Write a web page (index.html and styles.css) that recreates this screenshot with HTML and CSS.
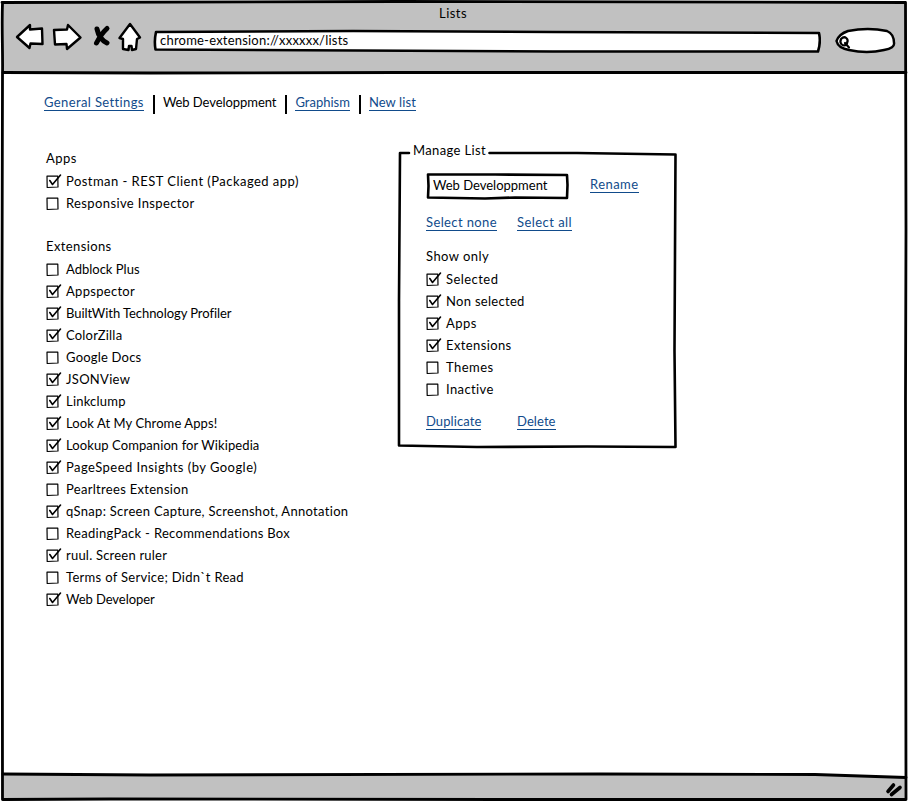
FILE: index.html
```html
<!DOCTYPE html>
<html lang="en">
<head>
<meta charset="utf-8">
<title>Lists</title>
<link rel="stylesheet" href="styles.css">
</head>
<body>
<div class="window">
  <svg class="outline" viewBox="0 0 908 802" aria-hidden="true">
    <path class="bar" d="M2 2H906V72H2ZM2 774L780 774Q850 775 906 777V799H2Z"/>
    <path class="line" d="M2.500 3C1.500 30 3 50 2.500 75L2 300C3 400 1 550 2.500 799.500L110 799L500 799.500L906 799.500L905.500 400L906 230L905.500 2.500L400 1.500L2 2.500"/>
    <path class="line" d="M3 72.500L150 73L400 72.500L906 72.500M3 774L150 775L600 774L815 774.500L906 777.500"/>
    <path class="grip" d="M888 791.500L893.500 785M891.500 794.500L900 787.500"/>
  </svg>
  <header class="toolbar">
    <div class="title">Lists</div>
    <div class="controls">
      <svg class="buttons" viewBox="0 0 128 32" aria-hidden="true">
        <path class="icon" d="M2 16L15 4V8.500L27 7.500L27.500 23L15.500 22.500L14.500 27ZM39 9L52 8.500L53 4L65.500 16.500L52 28L51.500 23L40 23.500ZM115 3L125 16.500L122 18L121 28L117 29L116.500 25H114L113.500 29L108 28V18L104.500 17Z"/>
        <path class="cross" d="M82 8Q84 18 92 22M92 7.500Q86 13 81.500 22"/>
      </svg>
      <div class="address">
        <svg class="shape" viewBox="0 0 668 24" aria-hidden="true"><path d="M3 3L200 2L400 3L666 4Q668 13 665 22.500L400 22.500L2.500 20.500Q1 12 3 3Z"/></svg>
        <span class="url ls-20">chrome-extension://xxxxxx/lists</span>
      </div>
      <svg class="search" viewBox="0 0 62 28" aria-hidden="true">
        <path class="icon" d="M13 4Q33 0 52 4Q59 7 59 16Q60 21 49 23Q32 27 14 23Q3 21 1.500 14Q4 7 13 4Z"/>
        <path class="lens" d="M12 17C8 20 4 17 6 12C10 8 14 12 12 16ZM10 16L14 20.500"/>
      </svg>
    </div>
  </header>
  <nav class="tabs">
    <a class="link ls-40">General Settings</a><span class="ls-n5">Web Developpment</span><a class="link ls-0">Graphism</a><a class="link ls-10">New list</a>
  </nav>
  <svg class="symbols" aria-hidden="true">
    <symbol id="off" viewBox="0 0 16 16"><path class="box" d="M1 3.200L11.800 3L12 14L1.200 14.500Z"/></symbol>
    <symbol id="on" viewBox="0 0 16 16"><path class="box" d="M1 3.200L11.800 3L12 14L1.200 14.500Z"/><path class="tick" d="M3.800 7.500L6.500 11.500L14.500 2"/></symbol>
  </svg>
  <main class="content">
    <section class="lists">
      <h2>Apps</h2>
      <ul>
        <li><svg><use href="#on"/></svg><span class="ls-45">Postman - REST Client (Packaged app)</span></li>
        <li><svg><use href="#off"/></svg><span class="ls-40">Responsive Inspector</span></li>
      </ul>
      <h2 class="next ls-40">Extensions</h2>
      <ul>
        <li><svg><use href="#off"/></svg><span class="ls-0">Adblock Plus</span></li>
        <li><svg><use href="#on"/></svg><span class="ls-30">Appspector</span></li>
        <li><svg><use href="#on"/></svg><span class="ls-n5">BuiltWith Technology Profiler</span></li>
        <li><svg><use href="#on"/></svg><span class="ls-20">ColorZilla</span></li>
        <li><svg><use href="#off"/></svg><span class="ls-20">Google Docs</span></li>
        <li><svg><use href="#on"/></svg><span class="ls-30">JSONView</span></li>
        <li><svg><use href="#on"/></svg><span class="ls-20">Linkclump</span></li>
        <li><svg><use href="#on"/></svg><span class="ls-10">Look At My Chrome Apps!</span></li>
        <li><svg><use href="#on"/></svg><span class="ls-10">Lookup Companion for Wikipedia</span></li>
        <li><svg><use href="#on"/></svg><span class="ls-45">PageSpeed Insights (by Google)</span></li>
        <li><svg><use href="#off"/></svg><span class="ls-30">Pearltrees Extension</span></li>
        <li><svg><use href="#on"/></svg><span class="ls-30">qSnap: Screen Capture, Screenshot, Annotation</span></li>
        <li><svg><use href="#off"/></svg><span class="ls-30">ReadingPack - Recommendations Box</span></li>
        <li><svg><use href="#on"/></svg><span class="ls-20">ruul. Screen ruler</span></li>
        <li><svg><use href="#off"/></svg><span class="ls-30">Terms of Service; Didn`t Read</span></li>
        <li><svg><use href="#on"/></svg><span class="ls-n5">Web Developer</span></li>
      </ul>
    </section>
    <section class="panel">
      <svg class="shape" viewBox="0 0 280 298" aria-hidden="true"><path d="M12 2H3L2 150L2 294.500L80 296L190 295.500L278.500 296L277.500 200L278.500 3.500L180 2L92.500 2"/></svg>
      <h2 class="legend ls-40">Manage List</h2>
      <div class="rename">
        <div class="field">
          <svg class="shape" viewBox="0 0 144 28" aria-hidden="true"><path d="M3 2.500L70 2.500L142 3L142.500 13L142 26L90 25.500L60 26.500L3 25.500L3.500 14Z"/></svg>
          <span class="ls-0">Web Developpment</span>
        </div>
        <a class="link">Rename</a>
      </div>
      <div class="pair"><a class="link ls-40">Select none</a><a class="link">Select all</a></div>
      <h2 class="filter">Show only</h2>
      <ul>
        <li><svg><use href="#on"/></svg><span>Selected</span></li>
        <li><svg><use href="#on"/></svg><span class="ls-30">Non selected</span></li>
        <li><svg><use href="#on"/></svg><span>Apps</span></li>
        <li><svg><use href="#on"/></svg><span class="ls-40">Extensions</span></li>
        <li><svg><use href="#off"/></svg><span>Themes</span></li>
        <li><svg><use href="#off"/></svg><span class="ls-40">Inactive</span></li>
      </ul>
      <div class="pair last"><a class="link ls-10">Duplicate</a><a class="link ls-10">Delete</a></div>
    </section>
  </main>
</div>
</body>
</html>
```
FILE: styles.css
```css
* { box-sizing: border-box; }
body { margin: 0; background: #fff; color: #000; font: 13px/22px Lato, "Liberation Sans", sans-serif; letter-spacing: .45px; }
svg { display: block; fill: none; stroke: #000; stroke-linecap: round; stroke-linejoin: round; }
h2 { margin: 0 0 1px; font-size: 13px; font-weight: 400; line-height: 22px; }
ul { list-style: none; margin: 0; padding: 0; }
li { display: flex; height: 22px; white-space: nowrap; }
li svg { width: 16px; height: 16px; margin: 3px 4px 0 0; flex: none; }
.ls-n5 { letter-spacing: -.06px; }
.ls-0 { letter-spacing: 0; }
.ls-10 { letter-spacing: .09px; }
.ls-20 { letter-spacing: .21px; }
.ls-30 { letter-spacing: .3px; }
.ls-40 { letter-spacing: .38px; }
.ls-45 { letter-spacing: .46px; }
.box { stroke-width: 1.2; }
.tick { stroke-width: 1.6; }
.symbols { width: 0; height: 0; position: absolute; }
.window { position: relative; width: 908px; height: 802px; overflow: hidden; }
.outline { position: absolute; inset: 0; width: 908px; height: 802px; z-index: -1; }
.bar { fill: #c1c1c1; stroke: none; }
.line { stroke-width: 2.8; }
.grip { stroke-width: 3.6; }
.toolbar { height: 74px; }
.title { height: 24px; padding: 2px 2px 0 0; text-align: center; }
.controls { display: flex; padding-left: 15px; }
.buttons { width: 128px; height: 32px; margin-top: -3px; flex: none; }
.icon { fill: #fff; stroke-width: 2.4; }
.cross { stroke-width: 5; }
.lens { stroke-width: 2.2; }
.address { position: relative; width: 668px; height: 24px; margin: 5px 0 0 10px; padding: 0 0 0 7px; flex: none; }
.shape { position: absolute; inset: 0; width: 100%; height: 100%; z-index: -1; }
.shape path { fill: #fff; stroke-width: 2.6; }
.url { display: block; line-height: 23px; }
.search { width: 62px; height: 28px; margin: 3px 0 0 14px; flex: none; }
.link { color: #114b8b; line-height: 15px; height: 16px; border-bottom: 1px solid #114b8b; white-space: nowrap; }
.tabs { display: flex; padding: 21px 0 0 44px; height: 60px; line-height: 15px; }
.tabs > * { position: relative; margin-right: 19px; }
.tabs > *:not(:last-child)::after { content: ""; position: absolute; right: -11px; top: 0; width: 2px; height: 19px; background: #000; }
.content { display: flex; }
.lists { width: 352px; padding: 13px 0 0 46px; }
.lists .next { margin-top: 21px; }
.panel { position: relative; width: 280px; height: 298px; margin: 17px 0 0 46px; padding: 0 0 0 28px; }
.legend { margin: -12px 0 0 -13px; }
.panel .shape { margin-left: -1px; }
.rename { display: flex; margin-top: 11px; }
.field { position: relative; width: 144px; height: 28px; padding: 0 0 0 7px; line-height: 26px; }
.rename .link { margin: 5px 0 0 20px; }
.pair { display: grid; grid-template-columns: 91px 100px; justify-items: start; margin-top: 15px; }
.filter { margin-top: 14px; }
.last { margin-top: 14px; }
```
